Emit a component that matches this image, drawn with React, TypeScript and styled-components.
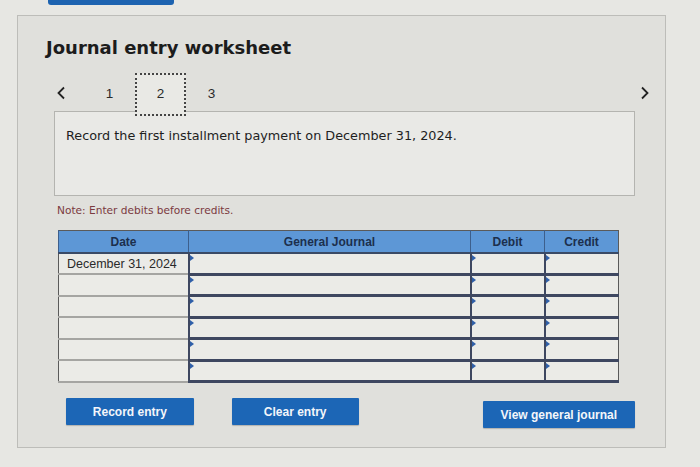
import React from "react";
import styled, { createGlobalStyle } from "styled-components";

const Global = createGlobalStyle`
  html, body { margin: 0; padding: 0; }
  body { background: #e7e7e3; width: 700px; height: 467px; overflow: hidden; font-family: "Liberation Sans", Arial, sans-serif; }
`;

const Page = styled.div`
  position: relative;
  width: 700px;
  height: 467px;
  padding: 15px 0 0 17px;
  box-sizing: border-box;
`;

const TopBar = styled.div`
  position: absolute;
  left: 48px;
  top: 0;
  width: 126px;
  height: 5px;
  background: #1d63b0;
  border-radius: 0 0 3px 3px;
`;

const Panel = styled.div`
  width: 649px;
  height: 433px;
  box-sizing: border-box;
  border: 1px solid #bdbdb9;
  background: #e0e0dc;
  display: flex;
  flex-direction: column;
`;

const Title = styled.h1`
  margin: 21px 0 0 28px;
  font-family: "DejaVu Sans", Verdana, sans-serif;
  font-weight: bold;
  font-size: 18px;
  line-height: 22px;
  color: #1c1c1c;
`;

const NavRow = styled.div`
  position: relative;
  z-index: 1;
  display: flex;
  align-items: center;
  margin: 14px 0 0 36px;
  width: 598px;
  height: 43px;
`;

const Chevron = styled.span`
  display: flex;
  width: 14px;
  justify-content: center;
  margin-top: -4px;
  color: #222;
`;

const Tabs = styled.div`
  display: flex;
  margin-left: 16px;
  flex: 1;
`;

const Tab = styled.div<{ $active?: boolean }>`
  width: 51px;
  height: 43px;
  box-sizing: border-box;
  display: flex;
  align-items: center;
  justify-content: center;
  font-size: 13.5px;
  color: #2a2a2a;
  border: ${(p) => (p.$active ? "2px dotted #444" : "2px solid transparent")};
  background: ${(p) => (p.$active ? "#e9e9e5" : "transparent")};
  padding-bottom: 3px;
`;

const Content = styled.div`
  padding: 0 30px 0 36px;
  display: flex;
  flex-direction: column;
`;

const Instruction = styled.div`
  height: 85px;
  margin-top: -5px;
  box-sizing: border-box;
  border: 1px solid #b4b4b0;
  background: #e9e9e6;
  padding: 16px 0 0 11px;
  font-family: "DejaVu Sans", Verdana, sans-serif;
  font-size: 12.8px;
  color: #1e1e1e;
`;

const Note = styled.div`
  margin: 8px 0 0 3px;
  font-family: "DejaVu Sans", Verdana, sans-serif;
  font-size: 10.6px;
  color: #7b3a40;
`;

const Table = styled.table`
  margin: 14px 0 0 4px;
  width: 556px;
  border-collapse: collapse;
  table-layout: fixed;
  border: 1px solid #5a5a5a;
`;

const Th = styled.th<{ $w: number }>`
  width: ${(p) => p.$w}px;
  height: 21px;
  padding: 0;
  background: #5d97d6;
  color: #1c2f4d;
  font-size: 12px;
  font-weight: bold;
  border-left: 1px solid #3d5f8c;
  border-bottom: 2px solid #3a4a66;
`;

const DateCell = styled.td`
  height: 18.5px;
  padding: 0 0 0 8px;
  font-size: 12.5px;
  color: #2a2a2a;
  background: #ebebe7;
  border-bottom: 2px solid #a5a5a2;
  border-right: 1px solid #8c8c8c;
`;

const InputCell = styled.td`
  position: relative;
  height: 18.5px;
  padding: 0;
  background: #ebebe7;
  border-left: 2px solid #3e4760;
  border-bottom: 3px solid #3e4760;
`;

const Marker = styled.span`
  position: absolute;
  left: 0;
  top: 1px;
  width: 0;
  height: 0;
  border-top: 3px solid transparent;
  border-bottom: 3px solid transparent;
  border-left: 4px solid #2f5fa8;
`;

const Buttons = styled.div`
  display: flex;
  align-items: flex-start;
  margin: 15px 0 0 12px;
`;

const Button = styled.button<{ $w: number; $gap?: number; $dy?: number }>`
  width: ${(p) => p.$w}px;
  height: 27px;
  margin-left: ${(p) => p.$gap ?? 0}px;
  margin-top: ${(p) => p.$dy ?? 0}px;
  border: none;
  border-radius: 1px;
  background: #1c66b6;
  color: #f4f6fa;
  font-family: "Liberation Sans", Arial, sans-serif;
  font-weight: bold;
  font-size: 12px;
  box-shadow: 0 1px 1px rgba(0,0,0,0.2);
`;

const ChevronIcon = ({ dir }: { dir: "l" | "r" }) => (
  <svg width="10" height="14" viewBox="0 0 10 14">
    <path
      d={dir === "l" ? "M8 1.5 L2.5 7 L8 12.5" : "M2 1.5 L7.5 7 L2 12.5"}
      fill="none"
      stroke="#222"
      strokeWidth="1.8"
    />
  </svg>
);

const rows = ["December 31, 2024", "", "", "", "", ""];

export default function App() {
  return (
    <>
      <Global />
      <Page>
        <TopBar />
        <Panel>
          <Title>Journal entry worksheet</Title>
          <NavRow>
            <Chevron><ChevronIcon dir="l" /></Chevron>
            <Tabs>
              <Tab>1</Tab>
              <Tab $active>2</Tab>
              <Tab>3</Tab>
            </Tabs>
            <Chevron><ChevronIcon dir="r" /></Chevron>
          </NavRow>
          <Content>
            <Instruction>Record the first installment payment on December 31, 2024.</Instruction>
            <Note>Note: Enter debits before credits.</Note>
            <Table>
              <thead>
                <tr>
                  <Th $w={129}>Date</Th>
                  <Th $w={281}>General Journal</Th>
                  <Th $w={73}>Debit</Th>
                  <Th $w={73}>Credit</Th>
                </tr>
              </thead>
              <tbody>
                {rows.map((d, i) => (
                  <tr key={i}>
                    <DateCell>{d}</DateCell>
                    <InputCell><Marker /></InputCell>
                    <InputCell><Marker /></InputCell>
                    <InputCell><Marker /></InputCell>
                  </tr>
                ))}
              </tbody>
            </Table>
            <Buttons>
              <Button $w={129}>Record entry</Button>
              <Button $w={128} $gap={38}>Clear entry</Button>
              <Button $w={154} $gap={124} $dy={3}>View general journal</Button>
            </Buttons>
          </Content>
        </Panel>
      </Page>
    </>
  );
}
